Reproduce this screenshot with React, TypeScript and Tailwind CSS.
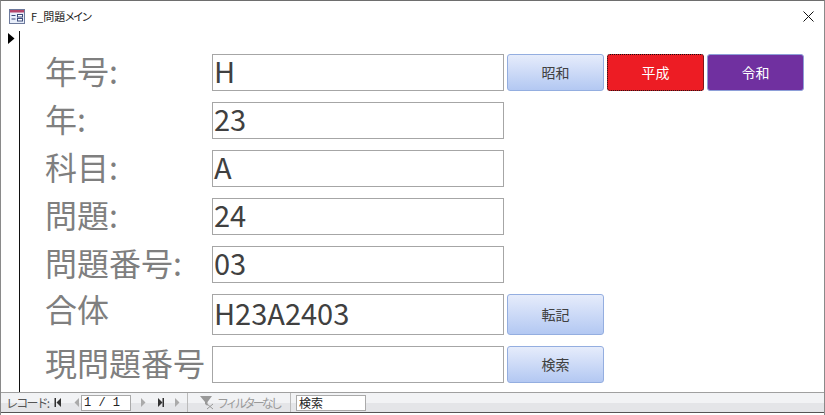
import React from "react";

const font = { fontFamily: '"Noto Sans CJK JP", sans-serif' };

function Btn({ label, kind = "blue", h = "h-[37px]" }: { label: string; kind?: string; h?: string }) {
  const cls =
    kind === "red"
      ? "bg-[#ed1c24] text-white border border-dotted border-[#111]"
      : kind === "purple"
      ? "bg-[#7030a0] text-white border border-[#8e9fd8]"
      : "bg-gradient-to-b from-[#e6ecfb] to-[#b3c8f2] text-[#404040] border border-[#94aee0]";
  return (
    <div className={`w-[97px] ${h} rounded-[3px] flex items-center justify-center text-[14px] ${cls}`}>
      {label}
    </div>
  );
}

function Row({ label, value, h = "h-[37px]", labelClass = "-mt-[2px]", children }: { label: string; value: string; h?: string; labelClass?: string; children?: React.ReactNode }) {
  return (
    <div className="flex items-start">
      <div className={`w-[192px] pl-[25px] text-[32px] leading-[36px] text-[#7f7f7f] whitespace-nowrap ${labelClass}`}>{label}</div>
      <div className={`w-[292px] ${h} border border-[#a6a6a6] bg-white pl-[1px] pb-[5px] flex items-center text-[29px] text-[#404040] leading-none`}>
        {value}
      </div>
      <div className="flex gap-[3px] ml-[3px]">{children}</div>
    </div>
  );
}

function Tri({ dir, color = "#333", bar }: { dir: "l" | "r"; color?: string; bar?: boolean }) {
  return (
    <svg width="8" height="9" viewBox="0 0 8 9">
      {dir === "l" ? <path d="M7 0v9L2.5 4.5z" fill={color} /> : <path d="M1 0v9l4.5-4.5z" fill={color} />}
      {bar && <rect x={dir === "l" ? 0.5 : 5.5} y="0" width="1.5" height="9" fill={color} />}
    </svg>
  );
}

export default function App() {
  return (
    <div className="w-[825px] h-[415px] bg-white flex flex-col border-t border-t-[#6e6e6e] border-l border-l-[#8a8a8a] border-r border-r-[#8a8a8a] overflow-hidden" style={font}>
      <div className="h-[30px] flex items-center pl-[8px] pr-[10px] shrink-0">
        <svg width="16" height="15" viewBox="0 0 16 15">
          <rect x="0.5" y="0.5" width="15" height="14" fill="#e8eefa" stroke="#6d7a9c" />
          <rect x="1" y="1" width="14" height="2.5" fill="#b5456a" />
          <path d="M2.5 6.5h4M2.5 10h4" stroke="#3a4a7a" />
          <rect x="8.5" y="5.5" width="5" height="2.5" fill="#fff" stroke="#3a4a7a" />
          <rect x="8.5" y="9.5" width="5" height="2.5" fill="#fff" stroke="#3a4a7a" />
        </svg>
        <span className="ml-[6px] text-[11px] text-[#222] whitespace-nowrap">
          F_問題<span className="tracking-[-2.4px] -ml-[1px]">メイン</span>
        </span>
        <svg className="ml-auto" width="11" height="11" viewBox="0 0 11 11">
          <path d="M0.5 0.5l10 10M10.5 0.5l-10 10" stroke="#111" strokeWidth="1" />
        </svg>
      </div>
      <div className="flex-1 flex min-h-0">
        <div className="w-[19px] border-r border-r-[#111] shrink-0 pl-[7px] pt-[2px] h-full">
          <svg width="7" height="11" viewBox="0 0 7 11"><path d="M0 0l6.5 5.5L0 11z" fill="#000" /></svg>
        </div>
        <div className="flex-1 flex flex-col pt-[23px] gap-[11px]">
          <Row label="年号:" value="H">
            <Btn label="昭和" />
            <Btn label="平成" kind="red" />
            <Btn label="令和" kind="purple" />
          </Row>
          <Row label="年:" value="23" />
          <Row label="科目:" value="A" />
          <Row label="問題:" value="24" />
          <Row label="問題番号:" value="03" />
          <Row label="合体" value="H23A2403" h="h-[41px]" labelClass="-mt-[4px]">
            <Btn label="転記" h="h-[41px]" />
          </Row>
          <Row label="現問題番号" value="">
            <Btn label="検索" />
          </Row>
        </div>
      </div>
      <div className="h-[21px] shrink-0 border-t border-t-[#a0a0a0] border-b border-b-[#555] bg-[linear-gradient(to_bottom,#f2f3f5_50%,#e4e5e8_50%)] flex items-center text-[12px] text-[#555] leading-none mb-[2px]">
        <span className="ml-[5px] w-[45px] whitespace-nowrap tracking-[-1.8px]">レコード:</span>
        <span className="ml-[3px] flex items-center gap-[10px]">
          <Tri dir="l" bar />
          <Tri dir="l" color="#aaa" />
        </span>
        <div className="ml-[1px] w-[50px] h-[16px] bg-white border border-[#aaa] pl-[2px] text-[12px] text-[#222] flex items-center" style={{ fontFamily: '"Liberation Mono", monospace' }}>1 / 1</div>
        <span className="ml-[9px] flex items-center gap-[9px]">
          <Tri dir="r" color="#aaa" />
          <Tri dir="r" bar />
          <Tri dir="r" color="#aaa" />
        </span>
        <span className="ml-[5px] h-full border-l border-l-[#bbb]" />
        <svg className="ml-[11px]" width="16" height="15" viewBox="0 0 16 15">
          <path d="M1 1h12L8.5 7v4L6 9V7z" fill="#999" />
          <path d="M8 9l6 5M14 9l-6 5" stroke="#999" />
        </svg>
        <span className="ml-[2px] w-[62px] whitespace-nowrap text-[#9a9a9a] text-[12px] tracking-[-3px]">フィルターなし</span>
        <span className="ml-[11px] h-full border-l border-l-[#bbb]" />
        <div className="ml-[5px] w-[70px] h-[16px] bg-white border border-[#aaa] pl-[2px] text-[12px] text-[#222] flex items-center">検索</div>
      </div>
    </div>
  );
}
